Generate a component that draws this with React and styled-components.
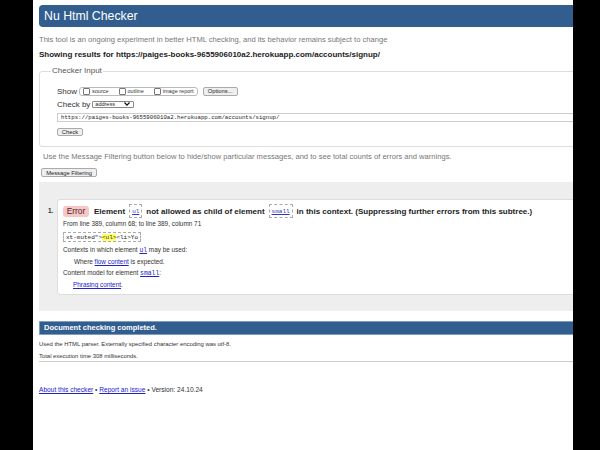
import React from "react";
import styled, { createGlobalStyle } from "styled-components";

const Global = createGlobalStyle`
  html, body { margin: 0; padding: 0; background: #000; }
  body { font-family: "Liberation Sans", Arial, sans-serif; color: #222; }
`;

const Page = styled.div`
  margin-left: 33px;
  width: 540px;
  height: 450px;
  background: #fff;
  overflow: hidden;
`;

const Inner = styled.div`
  width: 580px;
  padding: 5px 0 0 6px;
`;

const Header = styled.h1`
  margin: 0;
  height: 22px;
  line-height: 22px;
  padding-left: 5px;
  background: #315d8f;
  color: #fff;
  font-size: 12.3px;
  font-weight: normal;
  border-radius: 4px;
`;

const Intro = styled.p`
  margin: 8px 0 0;
  line-height: 10px;
  font-size: 7.6px;
  color: #777;
`;

const Showing = styled.p`
  margin: 5px 0 0;
  line-height: 10px;
  font-size: 8px;
  font-weight: bold;
  color: #222;
`;

const Fieldset = styled.fieldset`
  margin: 6px 0 0;
  padding: 0;
  border: 1px solid #ddd;
  border-radius: 3px;
  min-width: 0;
`;

const Legend = styled.legend`
  margin-left: 11px;
  padding: 0 1px;
  font-size: 8px;
  line-height: 10px;
  color: #555;
`;

const FieldBody = styled.div`
  padding: 10px 0 10px 17px;
  display: flex;
  flex-direction: column;
  align-items: flex-start;
`;

const Row = styled.div`
  display: flex;
  align-items: center;
  height: 10px;
  margin-top: ${(p) => p.$mt || 0}px;
  font-size: 8px;
  color: #333;
  white-space: nowrap;
`;

const Group = styled.span`
  display: inline-flex;
  align-items: center;
  gap: 10px;
  height: 9px;
  padding: 0 3px 0 3px;
  margin-left: 2px;
  border: 1px solid #bbb;
  border-radius: 3px;
  box-sizing: border-box;
  white-space: nowrap;
`;

const Check = styled.span`
  display: inline-flex;
  align-items: center;
  gap: 2px;
  font-size: 5.5px;
  color: #333;
`;

const Box = styled.span`
  width: 5px;
  height: 5px;
  border: 1px solid #777;
  border-radius: 1px;
  background: #fff;
`;

const Btn = styled.span`
  display: flex;
  align-items: center;
  justify-content: center;
  box-sizing: border-box;
  height: ${(p) => p.$h || 9}px;
  width: ${(p) => p.$w}px;
  margin-left: ${(p) => p.$ml || 0}px;
  margin-top: ${(p) => p.$mt || 0}px;
  font-size: 5.8px;
  color: #222;
  background: #efefef;
  border: 1px solid #aaa;
  border-radius: 2px;
  white-space: nowrap;
`;

const Select = styled.span`
  display: inline-flex;
  align-items: center;
  justify-content: space-between;
  box-sizing: border-box;
  width: 42px;
  height: 7px;
  padding: 0 3px 0 2px;
  margin-left: 2px;
  border: 1px solid #888;
  border-radius: 1px;
  font-size: 5.5px;
  color: #222;
`;

const UrlInput = styled.div`
  margin-top: 4px;
  box-sizing: border-box;
  width: 520px;
  height: 9px;
  line-height: 7px;
  padding-left: 3px;
  border: 1px solid #ccc;
  font-family: "Liberation Mono", "Courier New", monospace;
  font-size: 5.7px;
  color: #222;
`;

const Note = styled.p`
  margin: 5px 0 0 4px;
  line-height: 10px;
  font-size: 7.6px;
  color: #777;
`;

const GrayArea = styled.div`
  margin-top: 5px;
  background: #eee;
  padding: 17px 0 16px 9px;
`;

const Item = styled.div`
  display: grid;
  grid-template-columns: 9px 1fr;
`;

const Num = styled.span`
  font-size: 6.5px;
  font-weight: bold;
  color: #333;
  line-height: 12px;
  padding-top: 6px;
`;

const ErrBox = styled.div`
  background: #fff;
  border: 1px solid #ddd;
  border-radius: 3px;
  padding: 4px 0 4px 5px;
`;

const MsgLine = styled.div`
  display: flex;
  align-items: center;
  gap: 4px;
  height: 14px;
  font-size: 8px;
  font-weight: bold;
  color: #222;
  white-space: nowrap;
`;

const Badge = styled.span`
  display: inline-flex;
  align-items: center;
  justify-content: center;
  width: 26px;
  height: 11px;
  border-radius: 3px;
  background: #f7c7c7;
  color: #4a2424;
  font-size: 8.3px;
  font-weight: normal;
  margin-right: 1px;
`;

const CodeRef = styled.span`
  display: inline-flex;
  align-items: center;
  height: 14px;
  box-sizing: border-box;
  padding: 0 2px;
  border: 1px dashed #aaa;
  font-family: "Liberation Mono", monospace;
  font-size: 6px;
  font-weight: normal;
  color: #33c;
  text-decoration: underline;
`;

const Small = styled.div`
  font-size: 6.4px;
  line-height: ${(p) => p.$lh || 10}px;
  color: #333;
  font-weight: ${(p) => (p.$b ? "bold" : "normal")};
  padding-left: ${(p) => p.$pl || 0}px;
  margin-top: ${(p) => p.$mt || 0}px;
`;

const Extract = styled.div`
  display: flex;
  align-items: center;
  width: fit-content;
  margin-top: 3px;
  padding: 0 2px;
  height: 10px;
  box-sizing: border-box;
  border: 1px dashed #aaa;
  font-family: "Liberation Mono", monospace;
  font-size: 6px;
  color: #222;
  white-space: pre;
`;

const Mark = styled.mark`
  background: #ff6;
  color: #222;
`;

const Link = styled.a`
  color: #22c;
  text-decoration: underline;
  font-family: ${(p) => (p.$mono ? '"Liberation Mono", monospace' : "inherit")};
`;

const DoneBar = styled.div`
  margin-top: 10px;
  height: 14px;
  line-height: 12px;
  box-sizing: border-box;
  padding-left: 4px;
  background: #315d8f;
  border: 1px solid #7f9cc2;
  color: #fff;
  font-size: 7.5px;
  font-weight: bold;
`;

const Stat = styled.div`
  font-size: 5.9px;
  line-height: ${(p) => p.$lh}px;
  margin-top: ${(p) => p.$mt || 0}px;
  color: #333;
`;

const Rule = styled.hr`
  margin: 0;
  border: 0;
  border-top: 1px solid #ccc;
`;

const Footer = styled.p`
  margin: 23px 0 0;
  font-size: 6.6px;
  line-height: 10px;
  color: #333;
`;

export default function App() {
  return (
    <>
      <Global />
      <Page>
        <Inner>
          <Header>Nu Html Checker</Header>
          <Intro>
            This tool is an ongoing experiment in better HTML checking, and its behavior remains subject to change
          </Intro>
          <Showing>
            Showing results for https://paiges-books-9655906010a2.herokuapp.com/accounts/signup/
          </Showing>
          <Fieldset>
            <Legend>Checker Input</Legend>
            <FieldBody>
              <Row>
                Show
                <Group>
                  <Check><Box />source</Check>
                  <Check><Box />outline</Check>
                  <Check><Box />image report</Check>
                </Group>
                <Btn $w={35} $ml={5}>Options...</Btn>
              </Row>
              <Row $mt={3}>
                Check by
                <Select>
                  address
                  <svg width="6" height="4" viewBox="0 0 6 4">
                    <path d="M0.5 0.5 L3 3.2 L5.5 0.5" fill="none" stroke="#111" strokeWidth="1.2" />
                  </svg>
                </Select>
              </Row>
              <UrlInput>https://paiges-books-9655906010a2.herokuapp.com/accounts/signup/</UrlInput>
              <Btn $w={26} $h={8} $mt={6}>Check</Btn>
            </FieldBody>
          </Fieldset>
          <Note>
            Use the Message Filtering button below to hide/show particular messages, and to see total counts of errors and warnings.
          </Note>
          <Btn $w={56} $ml={2} $mt={6}>Message Filtering</Btn>
          <GrayArea>
            <Item>
              <Num>1.</Num>
              <ErrBox>
                <MsgLine>
                  <Badge>Error</Badge>
                  Element <CodeRef>ul</CodeRef> not allowed as child of element <CodeRef>small</CodeRef> in this
                  context. (Suppressing further errors from this subtree.)
                </MsgLine>
                <Small $mt={1}>From line 389, column 68; to line 389, column 71</Small>
                <Extract>
                  xt-muted"&gt;<Mark>&lt;ul&gt;</Mark>&lt;li&gt;Yo
                </Extract>
                <Small $mt={2} $lh={11}>
                  Contexts in which element <Link $mono>ul</Link> may be used:
                </Small>
                <Small $pl={11} $lh={12}>
                  Where <Link>flow content</Link> is expected.
                </Small>
                <Small $lh={10}>
                  Content model for element <Link $mono>small</Link>:
                </Small>
                <Small $pl={10} $lh={11}>
                  <Link>Phrasing content</Link>.
                </Small>
              </ErrBox>
            </Item>
          </GrayArea>
          <DoneBar>Document checking completed.</DoneBar>
          <Stat $lh={14} $mt={2}>Used the HTML parser. Externally specified character encoding was utf-8.</Stat>
          <Stat $lh={10}>Total execution time 308 milliseconds.</Stat>
          <Rule />
          <Footer>
            <Link>About this checker</Link> • <Link>Report an issue</Link> • Version: 24.10.24
          </Footer>
        </Inner>
      </Page>
    </>
  );
}
